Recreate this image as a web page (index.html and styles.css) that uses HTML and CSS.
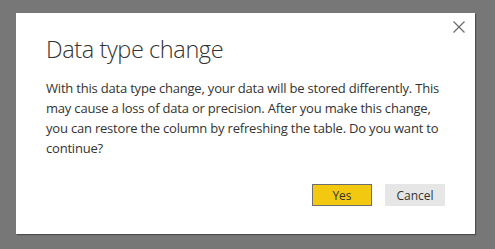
FILE: index.html
```html
<!DOCTYPE html>
<html lang="en">
<head>
    <meta charset="UTF-8">
    <title>Data type change</title>
    <link rel="stylesheet" href="styles.css">
</head>
<body>
    <div class="dialog">
        <button class="close" title="Close">
            <svg width="12" height="12" viewBox="0 0 12 12">
                <path d="M0.5 0.5 L11.5 11.5 M11.5 0.5 L0.5 11.5" stroke="#6b6b6b" stroke-width="1.2" fill="none"/>
            </svg>
        </button>
        <h1>Data type change</h1>
        <p>With this data type change, your data will be stored differently. This may cause a loss of data or precision. After you make this change, you can restore the column by refreshing the table. Do you want to continue?</p>
        <div class="actions">
            <button class="btn yes">Yes</button>
            <button class="btn cancel">Cancel</button>
        </div>
    </div>
</body>
</html>
```

FILE: styles.css
```css
html, body {
    margin: 0;
    height: 100%;
}
body {
    background: #777777;
    padding: 13px 20px 15px 16px;
    box-sizing: border-box;
    font-family: "Open Sans", "Noto Sans", sans-serif;
}
.dialog {
    position: relative;
    background: #fff;
    height: 221px;
    box-sizing: border-box;
    padding: 20px 30px 0 30px;
    box-shadow: 1px 1px 1px rgba(0, 0, 0, 0.35);
}
.close {
    position: absolute;
    top: 8px;
    right: 10px;
    border: none;
    background: none;
    padding: 0;
    width: 12px;
    height: 12px;
    line-height: 0;
}
h1 {
    margin: 0;
    font-weight: 300;
    font-size: 23.5px;
    color: #333;
    line-height: 32px;
    letter-spacing: -0.4px;
}
p {
    margin: 13px 0 0 0;
    font-size: 13px;
    line-height: 20px;
    color: #333;
    letter-spacing: -0.2px;
}
.actions {
    display: flex;
    justify-content: flex-end;
    gap: 13px;
    margin-top: 26px;
}
.btn {
    width: 60px;
    height: 22px;
    font-family: "Open Sans", "Noto Sans", sans-serif;
    font-size: 12px;
    color: #333;
    padding: 0;
    box-sizing: border-box;
}
.yes {
    background: #f2c811;
    border: 1px solid #6e6e6e;
}
.cancel {
    background: #e6e6e6;
    border: none;
}
```
